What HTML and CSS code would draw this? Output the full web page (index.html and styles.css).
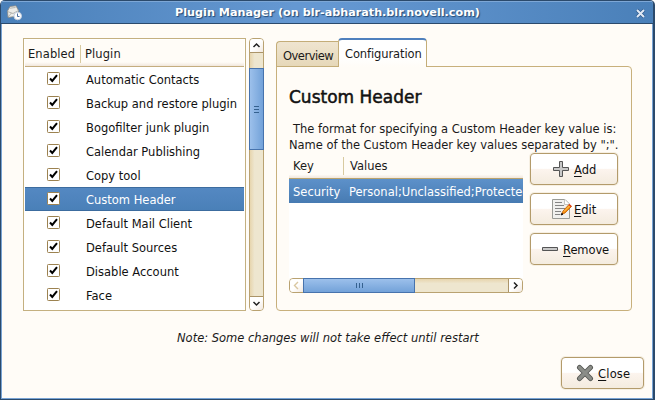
FILE: index.html
```html
<!DOCTYPE html>
<html lang="en">
<head>
<meta charset="utf-8">
<title>Plugin Manager</title>
<link rel="stylesheet" href="styles.css">
</head>
<body>
<div class="window">
  <header class="titlebar">
    <svg class="app-icon" width="16" height="16" viewBox="0 0 16 16">
      <path d="M1.500 6L4 1.500L10 .8L12.500 5.500L12 11L2 12.500Z" fill="#ecece8" stroke="#8a8a86" stroke-width=".8"/>
      <path d="M4 3.200L9.500 2.500M1.500 6.500L7 8.500L12.500 5.500M2 12L5.500 8" fill="none" stroke="#a5a5a0" stroke-width=".8"/>
      <circle cx="11.700" cy="11" r="3.800" fill="#fff" stroke="#c3cede"/>
      <path d="M11.500 8.500V11.500H13.500" fill="none" stroke="#4b6f9f"/>
    </svg>
    <h1 class="title"><span>Plugin Manager (on blr-abharath.blr.novell.com)</span></h1>
    <svg class="close-x" width="11" height="11" viewBox="0 0 11 11"><path d="M2 2L9 9M9 2L2 9" stroke="#2f5c90" stroke-width="3.500"/><path d="M2 2L9 9M9 2L2 9" stroke="#e0e9f5" stroke-width="2"/></svg>
  </header>
  <main class="content">
    <div class="panes">
      <section class="plugins">
        <div class="list-head"><span class="col-enabled">Enabled</span><i class="sep"></i><span class="col-plugin">Plugin</span></div>
        <ul class="rows">
          <li><svg class="check" viewBox="0 0 13 13"><use href="#tick"/></svg><span>Automatic Contacts</span></li>
          <li><svg class="check" viewBox="0 0 13 13"><use href="#tick"/></svg><span>Backup and restore plugin</span></li>
          <li><svg class="check" viewBox="0 0 13 13"><use href="#tick"/></svg><span>Bogofilter junk plugin</span></li>
          <li><svg class="check" viewBox="0 0 13 13"><use href="#tick"/></svg><span>Calendar Publishing</span></li>
          <li><svg class="check" viewBox="0 0 13 13"><use href="#tick"/></svg><span>Copy tool</span></li>
          <li class="selected"><svg class="check" viewBox="0 0 13 13"><use href="#tick"/></svg><span>Custom Header</span></li>
          <li><svg class="check" viewBox="0 0 13 13"><use href="#tick"/></svg><span>Default Mail Client</span></li>
          <li><svg class="check" viewBox="0 0 13 13"><use href="#tick"/></svg><span>Default Sources</span></li>
          <li><svg class="check" viewBox="0 0 13 13"><use href="#tick"/></svg><span>Disable Account</span></li>
          <li><svg class="check" viewBox="0 0 13 13"><use href="#tick"/></svg><span>Face</span></li>
        </ul>
      </section>
      <div class="vscroll">
        <div class="step up"><svg width="13" height="13" viewBox="0 0 13 13"><path d="M3.500 8L6.500 5L9.500 8" fill="none" stroke="#222" stroke-width="1.500"/></svg></div>
        <div class="thumb"><svg width="5" height="7" viewBox="0 0 5 7"><path d="M0 .5H5M0 3.500H5M0 6.500H5" stroke="#35618f"/></svg></div>
        <div class="step down"><svg width="13" height="13" viewBox="0 0 13 13"><path d="M3.500 5L6.500 8L9.500 5" fill="none" stroke="#222" stroke-width="1.500"/></svg></div>
      </div>
      <section class="notebook">
        <nav class="tabs">
          <div class="tab"><span>Overview</span></div>
          <div class="tab active"><span>Configuration</span></div>
        </nav>
        <div class="page">
          <h2><span>Custom Header</span></h2>
          <p class="desc first"><span>The format for specifying a Custom Header key value is:</span></p>
          <p class="desc"><span>Name of the Custom Header key values separated by ";".</span></p>
          <div class="editor">
            <div class="headers">
              <div class="kv-head"><span class="col-key">Key</span><i class="sep"></i><span class="col-values">Values</span></div>
              <div class="kv-body">
                <div class="kv-row"><span class="cell-key">Security</span><span class="cell-val">Personal;Unclassified;Protected</span></div>
              </div>
              <div class="hscroll">
                <div class="step left"><svg width="13" height="13" viewBox="0 0 13 13"><path d="M8 3L4.500 6.500L8 10" fill="none" stroke="#d9c7a0" stroke-width="1.400"/></svg></div>
                <div class="thumb"><svg width="7" height="5" viewBox="0 0 7 5"><path d="M.5 0V5M3.500 0V5M6.500 0V5" stroke="#35618f"/></svg></div>
                <div class="step right"><svg width="13" height="13" viewBox="0 0 13 13"><path d="M5 3.500L8 6.500L5 9.500" fill="none" stroke="#222" stroke-width="1.500"/></svg></div>
              </div>
            </div>
            <div class="actions">
              <button class="btn add"><svg width="16" height="16" viewBox="0 0 16 16"><path d="M6.500 .5H9.500V6.500H15.500V9.500H9.500V15.500H6.500V9.500H.5V6.500H6.500Z" fill="#c8c8c8" stroke="#555"/></svg><span><u>A</u>dd</span></button>
              <button class="btn edit"><svg width="21" height="22" viewBox="0 0 21 22">
                <path d="M1.500 1.500H14L18.500 6V20.500H1.500Z" fill="#f1f1ef" stroke="#999b96" stroke-linejoin="round"/>
                <path d="M13.500 1.500V6.500H18.500" fill="#fff" stroke="#c4c4c0"/>
                <path d="M4 4.500H11M4 7.500H13M4 10.500H14M4 13.500H10M4 16.500H9" stroke="#858585"/>
                <path d="M10.500 16.500L12 13L18 6.500L20.500 8.500L14 15Z" fill="#f58c0c" stroke="#c35d00" stroke-width=".8"/>
                <path d="M13 13.500L18.500 8" stroke="#ffd36c"/>
                <path d="M18 6.500L20.300 8.500" stroke="#e23a1d" stroke-width="1.400"/>
                <path d="M10 17L10.800 15.300L12 16.300Z" fill="#111" stroke="#111" stroke-width=".8"/></svg><span><u>E</u>dit</span></button>
              <button class="btn remove"><svg width="16" height="16" viewBox="0 0 16 16"><path d="M.5 6.500H15.500V9.500H.5Z" fill="#c8c8c8" stroke="#555"/></svg><span><u>R</u>emove</span></button>
            </div>
          </div>
        </div>
      </section>
    </div>
    <p class="note"><span>Note: Some changes will not take effect until restart</span></p>
    <footer class="foot">
      <button class="btn close"><svg width="18" height="18" viewBox="0 0 18 18"><path d="M3.500 3.500L14.500 14.500M14.500 3.500L3.500 14.500" stroke="#555753" stroke-width="5" stroke-linecap="round"/><path d="M3.500 3.500L14.500 14.500M14.500 3.500L3.500 14.500" stroke="#8b8d88" stroke-width="3.200" stroke-linecap="round"/></svg><span><u>C</u>lose</span></button>
    </footer>
  </main>
</div>
<svg class="defs" width="0" height="0"><defs><g id="tick"><rect x=".5" y=".5" width="12" height="12" rx=".8" fill="#fff" stroke="#9c8250"/><path d="M3 6.500L5.300 9L10 3.200" fill="none" stroke="#000" stroke-width="2"/></g></defs></svg>
</body>
</html>
```
FILE: styles.css
```css
* { box-sizing: border-box; margin: 0; padding: 0; }
body { width: 655px; height: 400px; overflow: hidden; background: #fff; font: 11.5px/16px "DejaVu Sans", sans-serif; color: #1a1a1a; }
span { white-space: nowrap; }
.defs { position: absolute; }
.window { width: 655px; height: 400px; display: flex; flex-direction: column; background: #fffcf7; border: 1px solid #2b4a6c; border-right-width: 2px; border-top-width: 0; border-radius: 5px 5px 0 0; box-shadow: inset 1px 0 #78a3d4, inset -1px 0 #78a3d4, inset 0 -1px #78a3d4; overflow: hidden; }
.titlebar { height: 24px; flex: none; display: flex; align-items: center; padding: 2px 7px 0 5px; border-top: 1px solid #2b4a6c; border-bottom: 1px solid #2b4a6c; background: linear-gradient(90deg, #4a80b9, #6598d2 45%, #6598d2 50%, #4a80b9); box-shadow: inset 0 1px #7da7d6; }
.title { flex: 1; text-align: center; font-size: 11.2px; line-height: 16px; color: #fff; text-shadow: 1px 1px 1px #234973; position: relative; left: -1px; }
.content { flex: 1; display: flex; flex-direction: column; padding: 14px 9px 0 22px; }
.panes { display: flex; height: 273px; }
.plugins { width: 223px; height: 273px; border: 1px solid #c4b080; padding: 1px; background: #fff; }
.list-head { height: 27px; display: flex; align-items: center; border-bottom: 1px solid #c4ad80; padding: 1px 0 0 3px; background: linear-gradient(#fffcf7 85%, #f1e7dd); }
.sep { width: 1px; height: 18px; background: #d8caa0; }
.col-enabled { width: 52px; letter-spacing: .1px; }
.col-plugin { margin-left: 4px; letter-spacing: .1px; }
.rows { list-style: none; }
.rows li { height: 24px; display: flex; align-items: center; padding-left: 22px; color: #111; }
.rows li span { margin: 2px 0 0 26px; }
.check { width: 13px; height: 13px; flex: none; position: relative; top: -1px; }
.rows .selected { color: #fff; background: linear-gradient(#5488c2, #4a80b8); border-top: 1px solid #3c6c9f; border-bottom: 1px solid #3c6c9f; }
.vscroll { width: 15px; height: 273px; margin-left: 3px; display: flex; flex-direction: column; background: linear-gradient(90deg, #e7d5ad, #eee6cf 35%); border: 1px solid #b9a271; border-radius: 4px; }
.vscroll .up { margin-bottom: 15px; border-bottom: 1px solid #ab9468; border-radius: 3px 3px 0 0; }
.vscroll .down { margin-top: auto; border-top: 1px solid #ab9468; border-radius: 0 0 3px 3px; }
.step { height: 14px; flex: none; background: linear-gradient(135deg, #fff 50%, #f2e9e0); }
.step svg { display: block; }
.thumb { display: flex; align-items: center; justify-content: center; flex: none; }
.vscroll .thumb { width: 15px; height: 82px; margin-left: -1px; border: 1px solid #4773ad; background: linear-gradient(90deg, #9cc0eb, #73a2d9); }
.notebook { width: 356px; margin-left: 12px; display: flex; flex-direction: column; }
.tabs { height: 29px; display: flex; align-items: flex-end; margin-bottom: -1px; position: relative; }
.tab { width: 62px; height: 26px; padding: 6px 0 0 6px; background: linear-gradient(#efe5d0, #e6d8b9); border: 1px solid #c4ad78; border-right: 0; border-radius: 4px 0 0 0; letter-spacing: -.5px; }
.tab.active { width: 89px; height: 29px; background: linear-gradient(#fff 60%, #fffcf7); border: 1px solid #c4ad78; border-top: 2px solid #4f80bd; border-bottom: 0; border-radius: 4px 4px 0 0; padding: 6px 0 0 6px; letter-spacing: -.1px; }
.page { height: 245px; border: 1px solid #c8b07c; border-radius: 0 4px 4px 4px; padding: 18px 13px 0 12px; }
h2 { font-size: 17px; line-height: 24px; font-weight: 400; height: 36px; color: #111; -webkit-text-stroke: .5px #111; }
.desc { height: 16px; letter-spacing: -.02px; }
.desc.first { padding-left: 4px; }
.editor { display: flex; justify-content: space-between; }
.headers { width: 234px; margin-top: 1px; }
.kv-head { height: 25px; display: flex; align-items: center; padding-left: 4px; border-bottom: 1px solid #b9a26c; background: linear-gradient(#fffcf7 85%, #f1e7dd); }
.col-key { width: 50px; }
.col-values { margin-left: 6px; }
.kv-body { height: 99px; background: #fff; overflow: hidden; }
.kv-row { height: 24px; display: flex; align-items: center; padding: 1px 0 0 4px; color: #fff; background: linear-gradient(#5d91ca, #477bb2); overflow: hidden; }
.cell-key { width: 56px; flex: none; }
.hscroll { height: 15px; display: flex; background: linear-gradient(#e7d5ad, #eee6cf 35%); border: 1px solid #b9a271; border-radius: 4px; }
.hscroll .step { width: 14px; height: 13px; }
.hscroll .left { border-right: 1px solid #ab9468; border-radius: 3px 0 0 3px; }
.hscroll .right { margin-left: auto; border-left: 1px solid #ab9468; border-radius: 0 3px 3px 0; }
.hscroll .thumb { width: 112px; height: 15px; margin: -1px 0 0 -1px; border: 1px solid #4773ad; background: linear-gradient(#9cc0eb, #73a2d9); }
.actions { width: 88px; display: flex; flex-direction: column; gap: 8px; }
.btn { height: 32px; display: flex; align-items: center; justify-content: flex-start; border: 1px solid #b39b6b; border-radius: 4px; background: linear-gradient(#fff 48%, #fcf4ee 50%, #f4ecdf); box-shadow: 0 0 0 1px #f6efe2; font: inherit; color: #111; }
.btn svg { flex: none; }
.btn span { margin-top: 1px; }
.btn u { text-underline-offset: 2px; }
.add { padding-left: 22px; }
.add span { margin-left: 5px; }
.edit { padding-left: 20px; }
.edit span { margin-left: 2px; }
.remove { padding-left: 11px; }
.remove span { margin-left: 5px; letter-spacing: -.1px; }
.note { margin-top: 19px; padding-left: 154px; font-style: italic; }
.foot { display: flex; justify-content: flex-end; margin-top: 11px; }
.close { width: 83px; padding-left: 14px; }
.close span { margin-left: 4px; letter-spacing: .2px; }
```
